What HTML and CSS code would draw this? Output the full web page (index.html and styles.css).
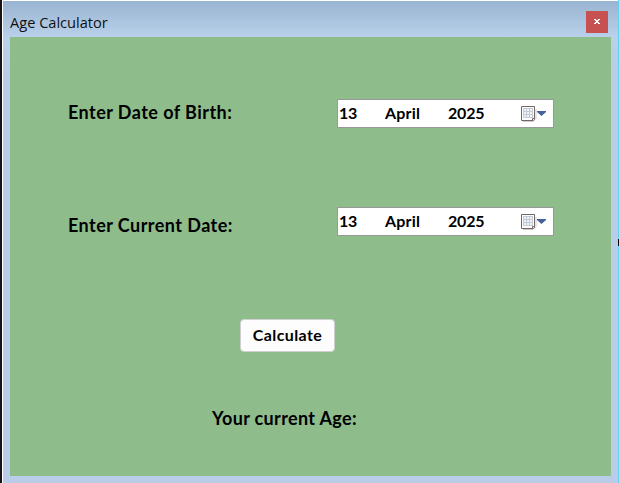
FILE: index.html
```html
<!DOCTYPE html>
<html lang="en">
<head>
<meta charset="utf-8">
<title>Age Calculator</title>
<link rel="stylesheet" href="styles.css">
</head>
<body>
<div class="desktop">
  <main class="window">
    <header class="titlebar">
      <h1 class="title">Age Calculator</h1>
      <button class="close" aria-label="Close">
        <svg width="6" height="5" viewBox="0 0 6 5" shape-rendering="crispEdges" fill="#fff"><path d="M0 0h2v1h2V0h2v1H5v1H4v1h1v1h1v1H4V4H2v1H0V4h1V3h1V2H1V1H0z"/></svg>
      </button>
    </header>
    <form class="form">
      <div class="row birth">
        <span class="label">Enter Date of Birth:</span>
        <div class="picker">
          <span class="day">13</span><span class="month">April</span><span class="year">2025</span>
          <svg class="calendar" width="26" height="17" viewBox="0 0 26 17"><path d="M2 15.5h10l3-3V3" fill="none" stroke="#7a6262" opacity=".35"/><path d="M.5.5h13v13l-1 1H.5z" fill="#fff" stroke="#746767"/><path d="M2 2h10v10H2z" fill="#c3cad5"/><path d="M3 3h2v2H3zm3 0h2v2H6zm3 0h2v2H9zM3 6h2v2H3zm3 0h2v2H6zm3 0h2v2H9zM3 9h2v2H3zm3 0h2v2H6zm3 0h2v2H9z" fill="#f0f3f6"/><path d="M11.500 14.500v-2h2" fill="#ddd" stroke="#746767"/><path d="M16 5h9v1l-4.500 4L16 6z" fill="#46609a"/></svg>
        </div>
      </div>
      <div class="row current">
        <span class="label">Enter Current Date:</span>
        <div class="picker">
          <span class="day">13</span><span class="month">April</span><span class="year">2025</span>
          <svg class="calendar" width="26" height="17" viewBox="0 0 26 17"><path d="M2 15.5h10l3-3V3" fill="none" stroke="#7a6262" opacity=".35"/><path d="M.5.5h13v13l-1 1H.5z" fill="#fff" stroke="#746767"/><path d="M2 2h10v10H2z" fill="#c3cad5"/><path d="M3 3h2v2H3zm3 0h2v2H6zm3 0h2v2H9zM3 6h2v2H3zm3 0h2v2H6zm3 0h2v2H9zM3 9h2v2H3zm3 0h2v2H6zm3 0h2v2H9z" fill="#f0f3f6"/><path d="M11.500 14.500v-2h2" fill="#ddd" stroke="#746767"/><path d="M16 5h9v1l-4.500 4L16 6z" fill="#46609a"/></svg>
        </div>
      </div>
      <button class="calculate" type="button">Calculate</button>
      <p class="result">Your current Age:</p>
    </form>
  </main>
  <div class="edge"><i class="mark"></i></div>
</div>
</body>
</html>
```

FILE: styles.css
```css
* { box-sizing: border-box; }
body { margin: 0; overflow: hidden; }
.desktop {
  display: flex;
  height: 483px;
  border-left: 2px solid #161419;
  background: #fff;
}
.window {
  flex: 1;
  margin: 1px 0 0 1px;
  padding: 0 7px 7px;
  background: linear-gradient(#99b4d1, #b9d1ea 36px, #b9cde8 70px);
}
.edge {
  width: 1px;
  padding-top: 239px;
  background: #5fd3f3;
}
.mark { display: block; width: 1px; height: 7px; background: #000; }
.titlebar {
  display: flex;
  align-items: flex-start;
  justify-content: space-between;
  height: 36px;
  padding: 10px 3px 0 0;
}
.title {
  margin: 0;
  font: 400 14.6px/22px "Open Sans", sans-serif;
  color: #101010;
}
.close {
  display: flex;
  align-items: center;
  justify-content: center;
  width: 22px;
  height: 22px;
  padding: 0 0 1px;
  border: 0;
  background: #c75050;
}
.form {
  display: flex;
  flex-direction: column;
  height: 439px;
  padding: 62px 57px 0 58px;
  background: #8fbc8b;
  font: 700 18px/24px Lato, sans-serif;
  color: #000;
}
.row {
  display: flex;
  justify-content: space-between;
  height: 29px;
}
.current { margin-top: 79px; }
.label { margin-top: 1px; letter-spacing: 0.45px; }
.current .label { margin-top: 6px; }
.picker {
  display: flex;
  width: 217px;
  height: 29px;
  padding: 1px 0 0 1px;
  border: 1px solid #999;
  background: #fff;
  font-size: 16px;
}
.day { width: 46px; letter-spacing: -0.2px; }
.month { width: 63px; letter-spacing: 0.2px; }
.year { width: 73px; letter-spacing: -0.2px; }
.calendar { margin-top: 5px; }
.calculate {
  width: 95px;
  height: 33px;
  margin: 83px 0 0 172px;
  padding: 0 0 2px;
  border: 1px solid #d0d0d0;
  border-radius: 4px;
  background: #fdfdfd;
  font: 700 16px/24px Lato, sans-serif;
  letter-spacing: 0.4px;
  color: #000;
}
.result { margin: 54px 0 0 144px; letter-spacing: 0.35px; }
```
